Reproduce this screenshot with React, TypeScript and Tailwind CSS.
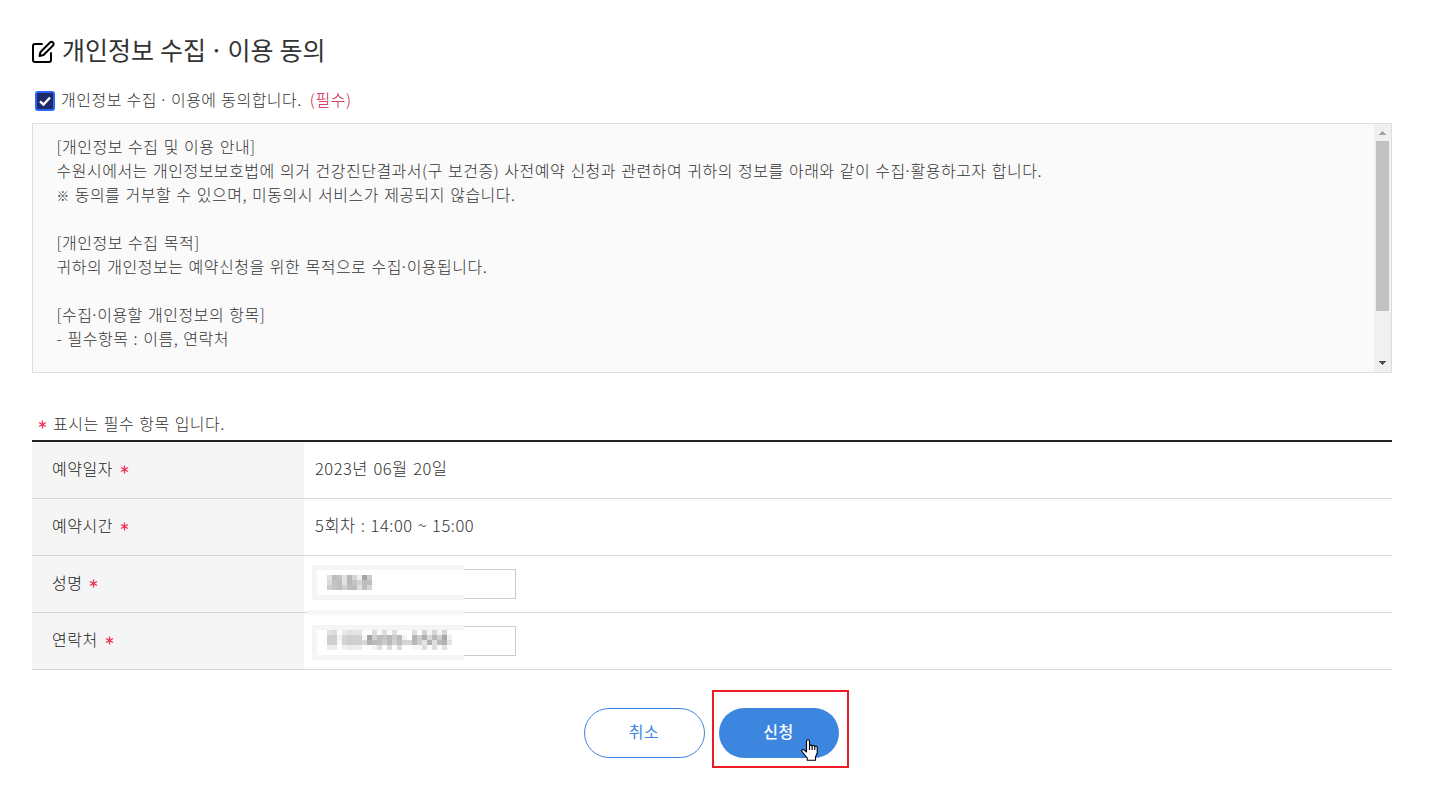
import { Fragment } from 'react';

const terms = [
  '[개인정보 수집 및 이용 안내]',
  '수원시에서는 개인정보보호법에 의거 건강진단결과서(구 보건증) 사전예약 신청과 관련하여 귀하의 정보를 아래와 같이 수집·활용하고자 합니다.',
  '※ 동의를 거부할 수 있으며, 미동의시 서비스가 제공되지 않습니다.',
  '',
  '[개인정보 수집 목적]',
  '귀하의 개인정보는 예약신청을 위한 목적으로 수집·이용됩니다.',
  '',
  '[수집·이용할 개인정보의 항목]',
  '- 필수항목 : 이름, 연락처',
];

// grey level of each 5px block, 255 is blank
const nameBlocks = [
  [225, 188, 196, 226, 184, 212, 240, 164, 204, 255],
  [218, 196, 190, 226, 184, 196, 212, 190, 190, 252],
  [206, 196, 190, 208, 190, 188, 222, 190, 212, 252],
];

const phoneBlocks = [
  [224, 218, 250, 232, 224, 230, 228, 255, 254, 220, 250, 222, 250, 222, 250],
  [206, 206, 242, 212, 206, 208, 208, 246, 164, 210, 190, 198, 186, 204, 186],
  [206, 206, 248, 212, 206, 208, 208, 216, 176, 186, 190, 204, 186, 208, 190],
  [236, 236, 254, 240, 234, 236, 236, 255, 252, 244, 222, 250, 220, 250, 220],
];

const phoneTail = [
  [254, 254, 222, 250, 210, 244, 214, 244, 212, 254],
  [242, 254, 180, 204, 174, 216, 184, 206, 168, 240],
  [212, 212, 182, 206, 228, 178, 222, 186, 178, 226],
  [254, 254, 248, 246, 222, 250, 222, 250, 224, 252],
];

function Star() {
  return (
    <svg viewBox="0 0 10 10" className="h-[9px] w-[9px] shrink-0" stroke="#f0325a" strokeWidth="1.5">
      <path d="M5 .6v8.8M1.1 2.8l7.8 4.4M8.9 2.8L1.1 7.2" />
    </svg>
  );
}

function Mosaic({ rows }: { rows: number[][] }) {
  return (
    <div>
      {rows.map((row, y) => (
        <div key={y} className="flex">
          {row.map((v, x) => (
            <span key={x} className="h-[5px] w-[5px]" style={{ backgroundColor: `rgb(${v},${v},${v})` }} />
          ))}
        </div>
      ))}
    </div>
  );
}

// the middle dot and the reference mark are set tighter than the font has them
function Tight({ text }: { text: string }) {
  return (
    <>
      {text.split(/([·※])/).map((part, i) => (
        <Fragment key={i}>
          {part === '·' && <span className="-mr-[2px] -ml-[2.5px]">·</span>}
          {part === '※' && <span className="text-[12.500px]">※</span>}
          {part !== '·' && part !== '※' && part}
        </Fragment>
      ))}
    </>
  );
}

function Row({ label, children }: { label: string; children: React.ReactNode }) {
  return (
    <div className="flex h-[57px] border-b border-[#d7d7d7]">
      <div className="flex w-[272px] items-center gap-[7px] bg-[#f5f5f5] pb-[5px] pl-5 text-[#222]">
        <span className="tracking-[0.5px]">{label}</span>
        <span className="pt-[3px]"><Star /></span>
      </div>
      {children}
    </div>
  );
}

function Terms() {
  return (
    <div className="mt-[11px] flex h-[250px] border border-[#ddd] bg-[#fafafa]">
      <div className="flex-1 overflow-hidden pt-[10px] pl-[23.500px] leading-6 tracking-[0.5px] [word-spacing:1.130px]">
        {terms.map((line, i) => (
          <p key={i} className="h-6 whitespace-nowrap"><Tight text={line} /></p>
        ))}
      </div>
      <div className="flex w-[17px] flex-col items-center justify-between bg-[#f0f0f0]">
        <div className="flex flex-col items-center">
          <svg viewBox="0 0 17 17" className="h-[17px] w-[17px]" fill="#a3a3a3" shapeRendering="crispEdges">
            <path d="M5 11h7v-1h-1v-1h-1v-1h-1v-1h-1v1h-1v1h-1v1h-1z" />
          </svg>
          <div className="h-[170px] w-[13px] bg-[#c1c1c1]" />
        </div>
        <svg viewBox="0 0 17 17" className="h-[17px] w-[17px]" fill="#505050" shapeRendering="crispEdges">
          <path d="M5 6h7v1h-1v1h-1v1h-1v1h-1v-1h-1v-1h-1v-1h-1z" />
        </svg>
      </div>
    </div>
  );
}

export default function App() {
  return (
    <div className="h-[786px] w-[1456px] overflow-hidden bg-white pt-9 pr-16 pl-8 font-['Noto_Sans_CJK_KR',sans-serif] text-[16px] leading-6 font-light text-[#333]">
      <h1 className="flex h-8 items-center text-[25px] font-normal">
        <svg viewBox="0 0 24 24" className="mr-[6px] h-6 w-6" fill="none" stroke="#000" strokeWidth="2" strokeLinecap="round" strokeLinejoin="round">
          <path d="M10 4H3a2 2 0 0 0-2 2v14a2 2 0 0 0 2 2h14a2 2 0 0 0 2-2v-7" />
          <path d="M18 2.500a2.100 2.100 0 0 1 3 3L11.500 15l-4 1 1-4z" />
        </svg>
        <span className="-mt-[6px] whitespace-nowrap [word-spacing:0.4px]"><Tight text="개인정보 수집 · 이용 동의" /></span>
      </h1>

      <div className="mt-5 flex h-6 items-center pl-[3px]">
        <svg viewBox="0 0 20 20" className="mt-[2px] mr-[6px] h-5 w-5">
          <rect width="20" height="20" rx="3" fill="#2b66f6" />
          <rect x="2" y="2" width="16" height="16" rx="1" fill="#1f2a6b" />
          <path d="M5 10.300l3.500 3.300L15 6.500" fill="none" stroke="#fff" strokeWidth="2.400" />
        </svg>
        <span className="-mt-[2px] tracking-[0.5px] [word-spacing:0.6px]"><Tight text="개인정보 수집 · 이용에 동의합니다." /></span>
        <span className="-mt-[2px] ml-2 tracking-[0.6px] text-[#d0103f]">(필수)</span>
      </div>

      <Terms />

      <div className="mt-[38px] flex h-6 items-center pl-[6px]">
        <span className="mr-[6px] pt-[3px]"><Star /></span>
        <span className="tracking-[0.5px] [word-spacing:1px]">표시는 필수 항목 입니다.</span>
      </div>

      <div className="mt-[5px] border-t-2 border-[#222]">
        <Row label="예약일자">
          <div className="flex items-center pb-1 pl-[11px]">
            <span className="text-[16.500px] tracking-[0.5px] [word-spacing:1.3px]">2023년 06월 20일</span>
          </div>
        </Row>
        <Row label="예약시간">
          <div className="flex items-center pb-1 pl-[11px]">
            <span className="text-[16.500px] tracking-[0.55px] [word-spacing:0.8px]">5회차 : 14:00 ~ 15:00</span>
          </div>
        </Row>
        <Row label="성명">
          <div className="relative mt-[13px] ml-2 h-[30px] w-[204px] border border-[#ccc]">
            <div className="absolute -top-[5px] -left-px h-[35px] w-[152px] border-y-[5px] border-l-[5px] border-[#f5f5f5] bg-white pt-[5px] pl-[10px]">
              <Mosaic rows={nameBlocks} />
            </div>
          </div>
        </Row>
        <Row label="연락처">
          <div className="relative mt-[13px] ml-2 h-[30px] w-[204px] border border-[#ccc]">
            <div className="absolute -top-[17px] -left-[6px] h-[5px] w-[157px] bg-[#f7f7f7]" />
            <div className="absolute -top-[2px] -left-px flex h-[35px] w-[152px] border-y-[5px] border-l-[5px] border-[#f5f5f5] bg-white pl-[10px]">
              <Mosaic rows={phoneBlocks} />
              <Mosaic rows={phoneTail} />
            </div>
          </div>
        </Row>
      </div>

      <div className="mt-5 flex pl-[552px] font-normal">
        <button className="mt-[18px] h-[50px] w-[121px] rounded-full border border-[#3c86e0] pr-px pb-1 tracking-[0.5px] text-[#3c86e0]">취소</button>
        <div className="relative ml-[7px] h-[78px] w-[137px] border-2 border-[#ec1c24] pt-4 pl-[5px]">
          <button className="h-[50px] w-[120px] rounded-full bg-[#3c86e0] pr-px pb-1 font-medium tracking-[0.5px] text-white">신청</button>
          <svg viewBox="0 0 17 22" className="absolute top-[47px] left-[87px] h-[22px] w-[17px]" fill="#fff" stroke="#000" strokeWidth="1.100" strokeLinejoin="round">
            <path d="M5.500 13V2.200a1.500 1.500 0 0 1 3 0V7.300a1.300 1.300 0 0 1 2.600.2 1.300 1.300 0 0 1 2.600.7 1.300 1.300 0 0 1 2.500.8V14l-1.700 4v3.300H6.200V19L1 12.500c-.8-1.500.8-2.600 2-1.600z" />
            <path d="M8.500 7v4M11.100 7.500V11M13.700 8.300V11" fill="none" />
          </svg>
        </div>
      </div>
    </div>
  );
}
